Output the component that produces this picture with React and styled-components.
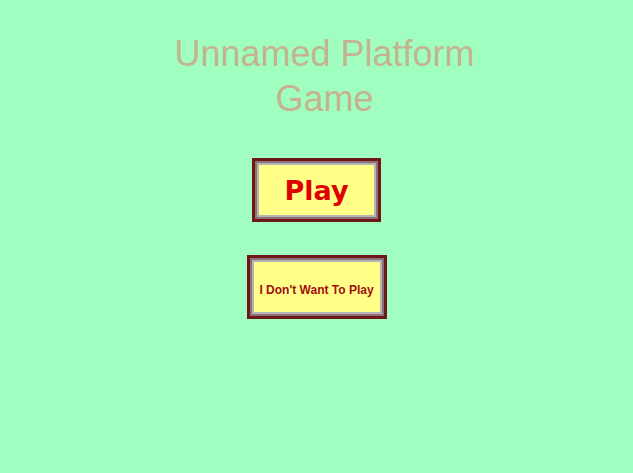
import React from 'react';
import styled, { createGlobalStyle } from 'styled-components';

const GlobalStyle = createGlobalStyle`
  html, body {
    margin: 0;
    padding: 0;
    background: #a0ffc0;
  }
`;

const Screen = styled.div`
  display: flex;
  flex-direction: column;
  align-items: center;
  min-height: 473px;
  padding-top: 31px;
  box-sizing: border-box;
`;

const Title = styled.h1`
  margin: 0 0 37px;
  padding-left: 16px;
  font-family: "Liberation Sans", Arial, sans-serif;
  font-weight: normal;
  font-size: 36px;
  line-height: 45px;
  color: #c4b38e;
  text-align: center;
`;

const Menu = styled.div`
  display: flex;
  flex-direction: column;
  align-items: center;
  gap: 33px;
`;

const MenuButton = styled.button`
  width: ${(p) => p.$width}px;
  height: 64px;
  padding: ${(p) => (p.$big ? '0' : '5px 0 0')};
  border: 3px solid #701818;
  box-sizing: border-box;
  background: #ffff88;
  box-shadow: inset 0 0 0 2px #907078, inset 0 0 0 4px #b4b4b4;
  color: ${(p) => (p.$big ? '#e00000' : '#a01010')};
  font-family: ${(p) => (p.$big ? '"DejaVu Sans", Verdana, sans-serif' : '"Liberation Sans", Arial, sans-serif')};
  font-weight: bold;
  font-size: ${(p) => (p.$big ? '27px' : '12px')};
  cursor: pointer;
  display: flex;
  align-items: center;
  justify-content: center;
`;

export default function App() {
  return (
    <>
      <GlobalStyle />
      <Screen>
        <Title>
          Unnamed Platform
          <br />
          Game
        </Title>
        <Menu>
          <MenuButton $width={129} $big>Play</MenuButton>
          <MenuButton $width={140}>I Don't Want To Play</MenuButton>
        </Menu>
      </Screen>
    </>
  );
}
